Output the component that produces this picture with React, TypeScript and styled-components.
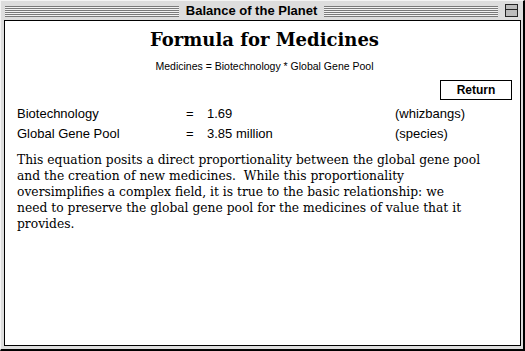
import styled, { createGlobalStyle } from 'styled-components';

const GlobalStyle = createGlobalStyle`
  html, body {
    margin: 0;
    padding: 0;
    background: #ffffff;
  }
`;

const WindowFrame = styled.div`
  width: 525px;
  height: 351px;
  box-sizing: border-box;
  background: #dddddd;
  border-top: 1px solid #f4f4f4;
  border-left: 1px solid #f4f4f4;
  border-right: 2px solid #000000;
  border-bottom: 2px solid #000000;
  display: flex;
  flex-direction: column;
  font-family: 'Liberation Sans', Arial, sans-serif;
`;

const TitleBar = styled.div`
  height: 19px;
  display: flex;
  align-items: center;
  padding: 0 4px 0 4px;
  gap: 4px;
`;

const Stripes = styled.div`
  flex: 1;
  height: 11px;
  margin-top: 1px;
  background: repeating-linear-gradient(
    to bottom,
    #7a7a7a 0px,
    #7a7a7a 1px,
    #f2f2f2 1px,
    #f2f2f2 2px
  );
`;

const WindowTitle = styled.div`
  font-size: 13px;
  font-weight: bold;
  color: #000;
  padding: 0 3px;
  white-space: nowrap;
`;

const ZoomBox = styled.div`
  width: 11px;
  height: 11px;
  margin-left: 3px;
  margin-right: 1px;
  border: 1px solid #222;
  background: linear-gradient(to bottom, #bbb 0 4px, #222 4px 5px, #bbb 5px);
`;

const Content = styled.div`
  flex: 1;
  margin: 0 2px 3px 3px;
  border: 1px solid #000;
  background: #fff;
  display: flex;
  flex-direction: column;
  padding: 0 8px 0 12px;
`;

const Heading = styled.h1`
  margin: 7px 0 0;
  text-align: center;
  font-family: 'DejaVu Serif', 'Liberation Serif', serif;
  font-weight: bold;
  font-size: 18px;
  line-height: 24px;
  color: #000;
`;

const Formula = styled.div`
  margin-top: 8px;
  text-align: center;
  font-size: 10.5px;
  line-height: 12px;
  color: #000;
`;

const ButtonRow = styled.div`
  display: flex;
  justify-content: flex-end;
  margin-top: 8px;
`;

const ReturnButton = styled.button`
  width: 72px;
  height: 20px;
  border: 1px solid #000;
  background: #fff;
  font-family: 'Liberation Sans', Arial, sans-serif;
  font-size: 12px;
  font-weight: bold;
  color: #000;
  padding: 0;
  cursor: pointer;
`;

const ValueTable = styled.div`
  display: grid;
  grid-template-columns: 169px 21px 188px auto;
  row-gap: 3px;
  margin-top: 5px;
  font-size: 13px;
  line-height: 17px;
  color: #000;
`;

const Cell = styled.span``;

const Explanation = styled.p`
  margin: 10px 0 0;
  font-family: 'DejaVu Serif', 'Liberation Serif', serif;
  font-size: 12.3px;
  line-height: 16px;
  color: #000;
`;

const rows = [
  { name: 'Biotechnology', value: '1.69', unit: '(whizbangs)' },
  { name: 'Global Gene Pool', value: '3.85 million', unit: '(species)' },
];

const App = () => {
  return (
    <>
      <GlobalStyle />
      <WindowFrame>
        <TitleBar>
          <Stripes />
          <WindowTitle>Balance of the Planet</WindowTitle>
          <Stripes />
          <ZoomBox />
        </TitleBar>
        <Content>
          <Heading>Formula for Medicines</Heading>
          <Formula>Medicines = Biotechnology * Global Gene Pool</Formula>
          <ButtonRow>
            <ReturnButton>Return</ReturnButton>
          </ButtonRow>
          <ValueTable>
            {rows.map((r) => (
              <>
                <Cell key={r.name}>{r.name}</Cell>
                <Cell>=</Cell>
                <Cell>{r.value}</Cell>
                <Cell>{r.unit}</Cell>
              </>
            ))}
          </ValueTable>
          <Explanation>
            This equation posits a direct proportionality between the global gene pool
            <br />
            and the creation of new medicines.&nbsp; While this proportionality
            <br />
            oversimplifies a complex field, it is true to the basic relationship: we
            <br />
            need to preserve the global gene pool for the medicines of value that it
            <br />
            provides.
          </Explanation>
        </Content>
      </WindowFrame>
    </>
  );
};

export default App;
